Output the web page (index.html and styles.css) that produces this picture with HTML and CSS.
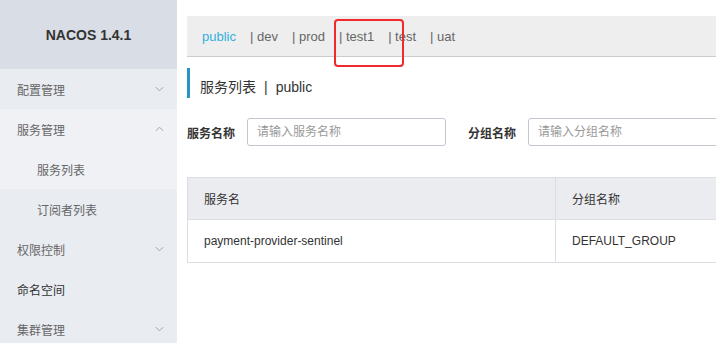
FILE: index.html
```html
<!DOCTYPE html>
<html>
<head>
  <title>Nacos</title>
  <link rel="stylesheet" href="styles.css">
</head>
<body>
  <div class="container">
    <div class="sidebar">
      <div class="brand">NACOS 1.4.1</div>
      <div class="nav-item">配置管理
        <svg class="arrow" viewBox="0 0 10 6"><path d="M1 1l4 4 4-4"/></svg>
      </div>
      <div class="nav-open">
        <div class="nav-item">服务管理
          <svg class="arrow" viewBox="0 0 10 6"><path d="M1 5l4-4 4 4"/></svg>
        </div>
        <div class="nav-item sub">服务列表</div>
      </div>
      <div class="nav-item sub">订阅者列表</div>
      <div class="nav-item">权限控制
        <svg class="arrow" viewBox="0 0 10 6"><path d="M1 1l4 4 4-4"/></svg>
      </div>
      <div class="nav-item strong">命名空间</div>
      <div class="nav-item">集群管理
        <svg class="arrow" viewBox="0 0 10 6"><path d="M1 1l4 4 4-4"/></svg>
      </div>
    </div>
    <div class="main-content">
      <div class="ns-bar">
        <span class="ns active">public</span>
        <span class="ns">| dev</span>
        <span class="ns">| prod</span>
        <span class="ns">| test1</span>
        <span class="ns">| test</span>
        <span class="ns">| uat</span>
        <div class="mark"></div>
      </div>
      <div class="page-title">服务列表<span class="sep">|</span>public</div>
      <div class="filters">
        <label class="filter-label">服务名称</label>
        <input class="filter-input" type="text" placeholder="请输入服务名称">
        <label class="filter-label group">分组名称</label>
        <input class="filter-input" type="text" placeholder="请输入分组名称">
      </div>
      <table class="table">
        <tr>
          <th class="col-name">服务名</th>
          <th>分组名称</th>
        </tr>
        <tr>
          <td>payment-provider-sentinel</td>
          <td>DEFAULT_GROUP</td>
        </tr>
      </table>
    </div>
  </div>
</body>
</html>
```

FILE: styles.css
```css
body {
  margin: 0;
  padding: 0;
  background: #fff;
  font-family: 'Liberation Sans', Arial, 'Noto Sans CJK SC', sans-serif;
  color: #333;
  overflow: hidden;
}

.container {
  display: flex;
  height: 343px;
}

.sidebar {
  width: 177px;
  flex-shrink: 0;
  background: #e9ecf1;
}

.brand {
  height: 69px;
  background: #d9dde5;
  display: flex;
  align-items: center;
  justify-content: center;
  font-size: 14px;
  font-weight: bold;
  color: #333;
}

.nav-open {
  background: #eff1f5;
}

.nav-item {
  height: 40px;
  display: flex;
  align-items: center;
  padding: 0 13px 0 17px;
  font-size: 12px;
  color: #666;
}

.nav-item.sub {
  padding-left: 37px;
}

.nav-item.strong {
  color: #333;
}

.arrow {
  margin-left: auto;
  width: 9px;
  height: 6px;
  fill: none;
  stroke: #999;
  stroke-width: 1;
}

.main-content {
  flex: 1;
  padding: 16px 0 0 10px;
  min-width: 0;
}

.ns-bar {
  position: relative;
  height: 40px;
  background: #eee;
  border-bottom: 1px solid #ccc;
  display: flex;
  align-items: center;
  padding-left: 15px;
  font-size: 13px;
  white-space: pre;
}

.ns {
  color: #666;
  margin-right: 14px;
}

.ns.active {
  color: #33b0dd;
}

.mark {
  position: absolute;
  left: 147px;
  top: 3px;
  width: 66px;
  height: 44px;
  border: 2px solid #f02a2a;
  border-radius: 4px;
}

.page-title {
  margin-top: 11px;
  height: 30px;
  box-sizing: border-box;
  border-left: 3px solid #2a94c9;
  padding: 8px 0 0 10px;
  line-height: 22px;
  font-size: 14px;
  color: #333;
}

.sep {
  margin: 0 8px;
}

.filters {
  display: flex;
  align-items: center;
  margin-top: 20px;
}

.filter-label {
  font-size: 12px;
  font-weight: bold;
  color: #333;
  margin-right: 12px;
  white-space: nowrap;
  flex-shrink: 0;
}

.filter-label.group {
  margin-left: 22px;
}

.filter-input {
  width: 199px;
  flex-shrink: 0;
  height: 28px;
  box-sizing: border-box;
  border: 1px solid #c4c6cf;
  border-radius: 3px;
  padding: 0 9px;
  font-family: inherit;
  font-size: 12px;
  outline: none;
}

.filter-input::placeholder {
  color: #999;
}

.table {
  margin-top: 31px;
  width: 560px;
  border-collapse: collapse;
  font-size: 12px;
}

.table th,
.table td {
  border: 1px solid #dcdee3;
  text-align: left;
  padding: 0 16px;
  font-weight: normal;
  color: #333;
}

.table th {
  height: 41px;
  background: #ebecf0;
}

.table td {
  height: 42px;
}

.col-name {
  width: 335px;
}
```
